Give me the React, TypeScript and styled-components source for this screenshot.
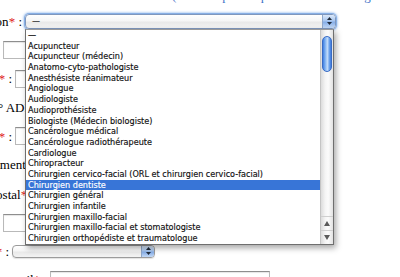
import React from 'react';
import styled, { createGlobalStyle } from 'styled-components';

const GlobalStyle = createGlobalStyle`
  html, body {
    margin: 0;
    padding: 0;
    background: #fff;
  }
  body {
    overflow: hidden;
  }
`;

const professions = [
  '—',
  'Acupuncteur',
  'Acupuncteur (médecin)',
  'Anatomo-cyto-pathologiste',
  'Anesthésiste réanimateur',
  'Angiologue',
  'Audiologiste',
  'Audioprothésiste',
  'Biologiste (Médecin biologiste)',
  'Cancérologue médical',
  'Cancérologue radiothérapeute',
  'Cardiologue',
  'Chiropracteur',
  'Chirurgien cervico-facial (ORL et chirurgien cervico-facial)',
  'Chirurgien dentiste',
  'Chirurgien général',
  'Chirurgien infantile',
  'Chirurgien maxillo-facial',
  'Chirurgien maxillo-facial et stomatologiste',
  'Chirurgien orthopédiste et traumatologue',
];

const SELECTED = 'Chirurgien dentiste';

const Page = styled.div`
  position: relative;
  width: 400px;
  height: 277px;
  overflow: hidden;
  font-family: "Liberation Serif", "Times New Roman", serif;
  font-size: 13px;
  color: #000;
`;

const Hint = styled.div`
  height: 15px;
  line-height: 15px;
  margin-top: -12px;
  padding-left: 172px;
  white-space: nowrap;
  color: #3f73c8;
`;

const Form = styled.div`
  display: flex;
  flex-direction: column;
  padding-top: 4px;
`;

const Row = styled.div<{ $h: number }>`
  display: flex;
  align-items: center;
  height: ${p => p.$h}px;
`;

// labels are right-aligned against the field; long ones run off the left edge
const Label = styled.div<{ $w: number }>`
  flex: 0 0 ${p => p.$w}px;
  min-width: 0;
  box-sizing: border-box;
  display: flex;
  justify-content: flex-end;
  padding-right: 3px;
  line-height: 15px;
`;

const LabelText = styled.span`
  flex: none;
  white-space: pre;
`;

const Req = styled.span`
  color: #e01b1b;
`;

const TextField = styled.input<{ $w: number }>`
  flex: none;
  width: ${p => p.$w}px;
  height: 18px;
  box-sizing: border-box;
  margin: 0;
  padding: 0 3px;
  border: 1px solid #b9b9b9;
  border-top-color: #8e8e8e;
  box-shadow: inset 0 1px 1px rgba(0, 0, 0, 0.1);
  background: #fff;
  outline: none;
`;

const PopUp = styled.div<{ $w: number; $h: number; $focus?: boolean }>`
  flex: none;
  display: flex;
  width: ${p => p.$w}px;
  height: ${p => p.$h}px;
  box-sizing: border-box;
  border: 1px solid ${p => (p.$focus ? '#7f97bd' : '#9b9b9b')};
  border-radius: 4px;
  background: linear-gradient(#ffffff, #f6f6f6 45%, #e9e9e9 55%, #f3f3f3);
  box-shadow: ${p =>
    p.$focus
      ? '0 0 0 1px rgba(120, 165, 225, 0.8), 0 0 2px 2px rgba(140, 180, 235, 0.55)'
      : '0 1px 1px rgba(0, 0, 0, 0.12)'};
  overflow: hidden;
`;

const PopUpText = styled.div`
  flex: 1;
  padding-left: 6px;
  font-family: "DejaVu Sans Condensed", "DejaVu Sans", sans-serif;
  font-stretch: condensed;
  font-size: 9px;
  line-height: 13px;
  color: #000;
`;

const PopUpButton = styled.div`
  flex: 0 0 12px;
  display: flex;
  align-items: center;
  justify-content: center;
  border-left: 1px solid #8ea6c9;
  background: linear-gradient(#dbe8f9, #a8c6ef 45%, #86aee8 55%, #c3d9f6);
`;

const Arrows = () => (
  <svg width="5" height="8" viewBox="0 0 5 8">
    <path d="M2.5 0 L5 3 L0 3 Z" fill="#1f2a3a" />
    <path d="M0 5 L5 5 L2.5 8 Z" fill="#1f2a3a" />
  </svg>
);

const Menu = styled.div`
  position: absolute;
  left: 25px;
  top: 29px;
  width: 309px;
  height: 216px;
  box-sizing: border-box;
  display: flex;
  background: #fff;
  border: 1px solid #6f6f6f;
  border-top-color: #9a9a9a;
  box-shadow: 2px 3px 6px rgba(0, 0, 0, 0.35);
`;

const List = styled.div`
  flex: 1;
  min-width: 0;
  display: flex;
  flex-direction: column;
`;

const Option = styled.div<{ $selected?: boolean }>`
  height: 10.7px;
  line-height: 10.7px;
  padding-left: 2px;
  white-space: nowrap;
  overflow: hidden;
  font-family: "DejaVu Sans Condensed", "DejaVu Sans", sans-serif;
  font-stretch: condensed;
  font-size: 9px;
  -webkit-text-stroke: 0.15px currentColor;
  color: ${p => (p.$selected ? '#fff' : '#111')};
  background: ${p => (p.$selected ? '#3875d7' : 'transparent')};
`;

const ScrollBar = styled.div`
  flex: 0 0 12px;
  display: flex;
  flex-direction: column;
  border-left: 1px solid #c4c4c4;
  background: linear-gradient(to right, #dcdcdc, #f4f4f4 35%, #fbfbfb 60%, #e2e2e2);
`;

const Track = styled.div`
  flex: 1;
  padding-top: 6px;
`;

const Thumb = styled.div`
  height: 36px;
  margin: 0 1px 0 1px;
  box-sizing: border-box;
  border: 1px solid #3a6cc4;
  border-radius: 5px;
  background: linear-gradient(to right, #3f7fe2, #8fbdf5 35%, #c3dcfa 55%, #6aa0ea 80%, #3d78dc);
`;

const StepButton = styled.div`
  height: 13px;
  display: flex;
  align-items: center;
  justify-content: center;
  border-top: 1px solid #cfcfcf;
`;

const Triangle = ({ down }: { down?: boolean }) => (
  <svg width="6" height="5" viewBox="0 0 6 5">
    <path d={down ? 'M0 0 L6 0 L3 5 Z' : 'M3 0 L6 5 L0 5 Z'} fill="#5a5a5a" />
  </svg>
);

const Field = ({ w, label, req, children }: { w: number; label: string; req?: boolean; children: React.ReactNode }) => (
  <>
    <Label $w={w}>
      <LabelText>
        {label}
        {req && <Req>*</Req>} :
      </LabelText>
    </Label>
    {children}
  </>
);

const App = () => {
  return (
    <Page>
      <GlobalStyle />
      <Hint>(les champs marqués d'un * sont obligatoires)</Hint>
      <Form>
        <Row $h={28}>
          <Field w={25} label="Profession" req>
            <PopUp $w={311} $h={15} $focus>
              <PopUpText>—</PopUpText>
              <PopUpButton><Arrows /></PopUpButton>
            </PopUp>
          </Field>
        </Row>
        <Row $h={29}>
          <Field w={2} label="Spécialité">
            <TextField $w={280} readOnly />
          </Field>
        </Row>
        <Row $h={29}>
          <Field w={15} label="Nom" req>
            <TextField $w={260} readOnly />
          </Field>
        </Row>
        <Row $h={29}>
          <Field w={61} label="N° ADELI" req>
            <TextField $w={200} readOnly />
          </Field>
        </Row>
        <Row $h={28}>
          <Field w={15} label="Prénom" req>
            <TextField $w={260} readOnly />
          </Field>
        </Row>
        <Row $h={29}>
          <Field w={86} label="Complément d'adresse">
            <TextField $w={200} readOnly />
          </Field>
        </Row>
        <Row $h={30}>
          <Field w={37} label="Code postal" req>
            <TextField $w={120} readOnly />
          </Field>
        </Row>
        <Row $h={28}>
          <Field w={2} label="Ville" req>
            <TextField $w={280} readOnly />
          </Field>
        </Row>
        <Row $h={28}>
          <Field w={12} label="Pays" req>
            <PopUp $w={143} $h={13}>
              <PopUpText />
              <PopUpButton><Arrows /></PopUpButton>
            </PopUp>
          </Field>
        </Row>
        <Row $h={29}>
          <Field w={50} label="Adresse e-mail" req>
            <TextField $w={220} readOnly />
          </Field>
        </Row>
      </Form>
      <Menu>
        <List>
          {professions.map(p => (
            <Option key={p} $selected={p === SELECTED}>{p}</Option>
          ))}
        </List>
        <ScrollBar>
          <Track><Thumb /></Track>
          <StepButton><Triangle /></StepButton>
          <StepButton><Triangle down /></StepButton>
        </ScrollBar>
      </Menu>
    </Page>
  );
};

export default App;
